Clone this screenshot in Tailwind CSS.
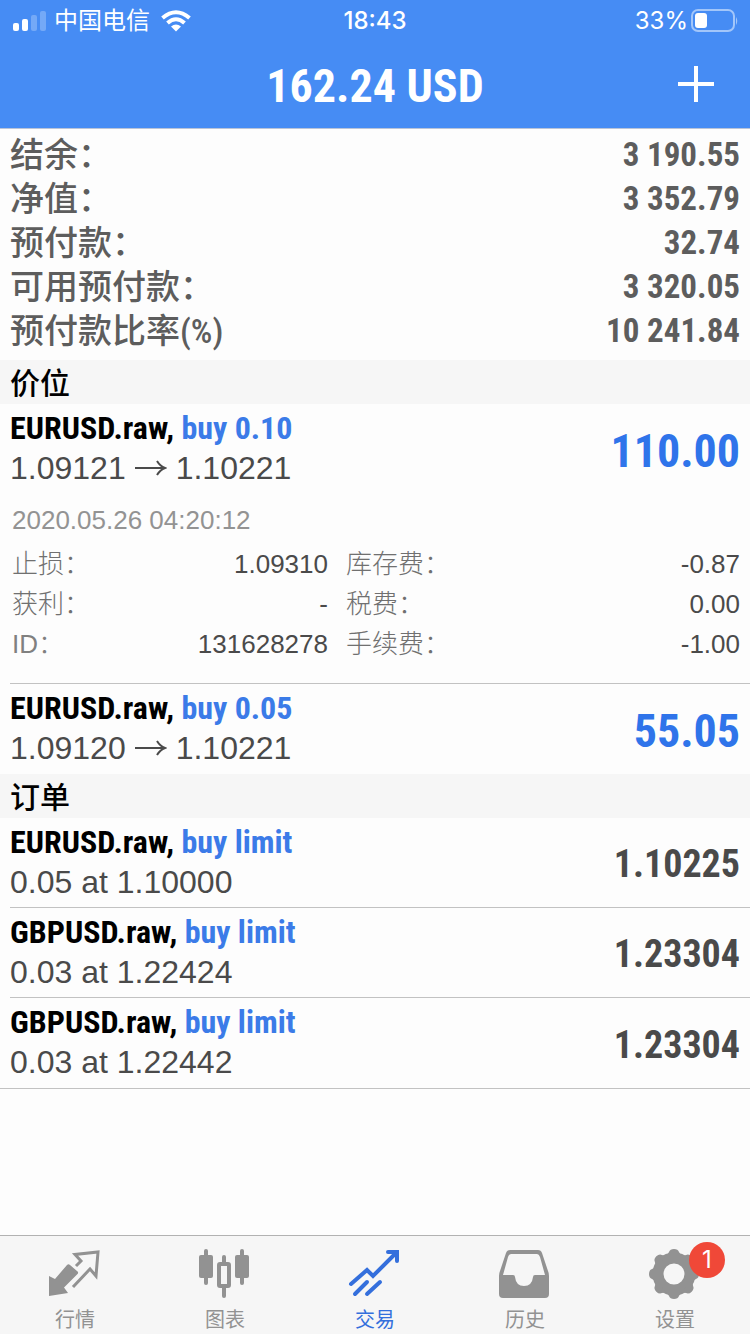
<!DOCTYPE html>
<html lang="zh-CN">
<head>
<meta charset="utf-8">
<meta name="viewport" content="width=device-width, initial-scale=1">
<title>交易</title>
<script src="https://cdn.jsdelivr.net/npm/@tailwindcss/browser@4"></script>
</head>
<body class="flex min-h-screen flex-col bg-[#fdfdfd] font-['Liberation_Sans','Noto_Sans_CJK_SC',sans-serif] text-[#4a4a4a]">

<header class="border-b border-[#b9c4d8] bg-[#468cf4] text-white">
  <div class="grid h-10 grid-cols-3 items-center px-3 pt-px font-['Inter','Noto_Sans_CJK_SC',sans-serif] text-2xl leading-10">
    <div class="flex items-center">
      <svg class="mr-2 h-6 w-[34px]" viewBox="0 0 34 24" fill="#fff" aria-hidden="true">
        <rect x="1" y="14" width="6" height="8" rx="2"/>
        <rect x="10" y="10" width="6" height="12" rx="2"/>
        <rect x="19" y="6" width="6" height="16" rx="2" opacity=".25"/>
        <rect x="28" y="2" width="6" height="20" rx="2" opacity=".25"/>
      </svg>
      <span>中国电信</span>
      <svg class="ml-[10px] h-6 w-8" viewBox="0 0 32 24" fill="none" stroke="#fff" stroke-width="4" aria-hidden="true">
        <path d="M2.500 9Q16-2.500 29.500 9"/>
        <path d="M7.500 14Q16 6.500 24.500 14"/>
        <path d="M16 22.500L11 17.500Q16 13.500 21 17.500Z" fill="#fff" stroke="none"/>
      </svg>
    </div>
    <time class="text-center font-medium">18:43</time>
    <div class="flex items-center justify-end gap-0.5">
      <span>33%</span>
      <svg class="h-6 w-12" viewBox="0 0 48 24" fill="none" aria-hidden="true">
        <rect x="2" y="1" width="42" height="21" rx="6" stroke="#a2c6fa" stroke-width="2"/>
        <rect x="5" y="4" width="12" height="15" rx="3" fill="#fff"/>
        <path d="M46 8Q48.500 12 46 16Z" fill="#a2c6fa"/>
      </svg>
    </div>
  </div>
  <div class="grid h-[88px] grid-cols-[1fr_auto_1fr] items-center px-8">
    <h1 class="col-start-2 pt-1 font-['Roboto_Condensed','Roboto',sans-serif] text-[46px] font-bold">162.24 USD</h1>
    <button type="button" aria-label="新建订单" class="justify-self-end">
      <svg class="h-11 w-11" viewBox="0 0 44 44" stroke="#fff" stroke-width="4" aria-hidden="true"><path d="M22 4V40M4 22H40"/></svg>
    </button>
  </div>
</header>

<main class="grow">
  <dl class="px-[10px] pt-1 pb-[7px] font-['Roboto_Condensed','Noto_Sans_CJK_SC',sans-serif] text-[34px] leading-11 text-[#5d5d5d]">
    <div class="flex justify-between"><dt class="font-medium">结余：</dt><dd class="text-[33px] leading-11 font-bold">3 190.55</dd></div>
    <div class="flex justify-between"><dt class="font-medium">净值：</dt><dd class="text-[33px] leading-11 font-bold">3 352.79</dd></div>
    <div class="flex justify-between"><dt class="font-medium">预付款：</dt><dd class="text-[33px] leading-11 font-bold">32.74</dd></div>
    <div class="flex justify-between"><dt class="font-medium">可用预付款：</dt><dd class="text-[33px] leading-11 font-bold">3 320.05</dd></div>
    <div class="flex justify-between"><dt class="font-medium">预付款比率(%)</dt><dd class="text-[33px] leading-11 font-bold">10 241.84</dd></div>
  </dl>

  <section>
    <h2 class="bg-[#f6f6f6] px-[10px] pb-0.5 font-['Noto_Sans_CJK_SC',sans-serif] text-[30px] leading-[42px] font-medium text-black">价位</h2>
    <ul>
      <li class="ml-[10px] border-b border-[#c2c2c2] pr-[10px]">
        <div class="flex h-[90px] items-center justify-between">
          <div class="pb-0.5">
            <h3 class="font-['Roboto_Condensed','Roboto',sans-serif] text-[32px] leading-10 font-bold text-black">EURUSD.raw, <span class="text-[#3b7be8]">buy 0.10</span></h3>
            <p class="flex items-center gap-[9px] text-[32px] leading-10">1.09121
              <svg class="h-5 w-8" viewBox="0 0 32 20" fill="none" stroke="#4a4a4a" stroke-width="2" role="img" aria-label="至"><path d="M0 10H30M22 3Q25 8 30 10Q25 12 22 17"/></svg>
              1.10221</p>
          </div>
          <strong class="pt-1 font-['Roboto_Condensed','Roboto',sans-serif] text-[46px] font-bold text-[#2f74ea]">110.00</strong>
        </div>
        <div class="pt-[6px] pb-[19px] pl-[2px] text-[26px] leading-10">
          <time class="block pb-1 text-[#939393]">2020.05.26 04:20:12</time>
          <dl class="grid grid-cols-[316fr_394fr] gap-x-[18px]">
            <div class="flex justify-between"><dt class="font-light text-[#707070]">止损：</dt><dd>1.09310</dd></div>
            <div class="flex justify-between"><dt class="font-light text-[#707070]">库存费：</dt><dd>-0.87</dd></div>
            <div class="flex justify-between"><dt class="font-light text-[#707070]">获利：</dt><dd>-</dd></div>
            <div class="flex justify-between"><dt class="font-light text-[#707070]">税费：</dt><dd>0.00</dd></div>
            <div class="flex justify-between"><dt class="font-light text-[#808080]">ID：</dt><dd>131628278</dd></div>
            <div class="flex justify-between"><dt class="font-light text-[#707070]">手续费：</dt><dd>-1.00</dd></div>
          </dl>
        </div>
      </li>
      <li class="ml-[10px] flex h-[90px] items-center justify-between pr-[10px]">
        <div class="pb-0.5">
          <h3 class="font-['Roboto_Condensed','Roboto',sans-serif] text-[32px] leading-10 font-bold text-black">EURUSD.raw, <span class="text-[#3b7be8]">buy 0.05</span></h3>
          <p class="flex items-center gap-[9px] text-[32px] leading-10">1.09120
            <svg class="h-5 w-8" viewBox="0 0 32 20" fill="none" stroke="#4a4a4a" stroke-width="2" role="img" aria-label="至"><path d="M0 10H30M22 3Q25 8 30 10Q25 12 22 17"/></svg>
            1.10221</p>
        </div>
        <strong class="pt-1 font-['Roboto_Condensed','Roboto',sans-serif] text-[46px] font-bold text-[#2f74ea]">55.05</strong>
      </li>
    </ul>
  </section>

  <section>
    <h2 class="bg-[#f6f6f6] px-[10px] pb-0.5 font-['Noto_Sans_CJK_SC',sans-serif] text-[30px] leading-[42px] font-medium text-black">订单</h2>
    <ul class="border-b border-[#c2c2c2]">
      <li class="ml-[10px] flex h-[90px] items-center justify-between border-b border-[#c2c2c2] pr-[10px]">
        <div class="pb-0.5">
          <h3 class="font-['Roboto_Condensed','Roboto',sans-serif] text-[32px] leading-10 font-bold text-black">EURUSD.raw, <span class="text-[#3b7be8]">buy limit</span></h3>
          <p class="text-[32px] leading-10">0.05 at 1.10000</p>
        </div>
        <strong class="pt-1 font-['Roboto_Condensed','Roboto',sans-serif] text-[38px] font-bold">1.10225</strong>
      </li>
      <li class="ml-[10px] flex h-[90px] items-center justify-between border-b border-[#c2c2c2] pr-[10px]">
        <div class="pb-0.5">
          <h3 class="font-['Roboto_Condensed','Roboto',sans-serif] text-[32px] leading-10 font-bold text-black">GBPUSD.raw, <span class="text-[#3b7be8]">buy limit</span></h3>
          <p class="text-[32px] leading-10">0.03 at 1.22424</p>
        </div>
        <strong class="pt-1 font-['Roboto_Condensed','Roboto',sans-serif] text-[38px] font-bold">1.23304</strong>
      </li>
      <li class="ml-[10px] flex h-[90px] items-center justify-between pr-[10px]">
        <div class="pb-0.5">
          <h3 class="font-['Roboto_Condensed','Roboto',sans-serif] text-[32px] leading-10 font-bold text-black">GBPUSD.raw, <span class="text-[#3b7be8]">buy limit</span></h3>
          <p class="text-[32px] leading-10">0.03 at 1.22442</p>
        </div>
        <strong class="pt-1 font-['Roboto_Condensed','Roboto',sans-serif] text-[38px] font-bold">1.23304</strong>
      </li>
    </ul>
  </section>
</main>

<nav class="sticky bottom-0 grid grid-cols-5 border-t border-[#b2b2b2] bg-[#f6f6f6] pt-3 font-['Noto_Sans_CJK_SC',sans-serif] text-xl leading-7 text-[#929292]">
  <a href="#quotes" class="flex flex-col items-center gap-[3px] pb-px">
    <svg class="h-[54px] w-[54px]" viewBox="0 0 54 54" aria-hidden="true">
      <path d="M1 28L7 31L19 17Q20.500 15.500 22 17L29 23Q31 24.500 29.500 26L16 39.500L20 45L1 48Z" fill="currentColor"/>
      <path d="M28 18L33 13L27 6.500L50 4L48 28L42 21L25 39" fill="none" stroke="currentColor" stroke-width="3"/>
    </svg>
    行情
  </a>
  <a href="#charts" class="flex flex-col items-center gap-[3px] pb-px">
    <svg class="h-[54px] w-[54px]" viewBox="0 0 54 54" fill="currentColor" aria-hidden="true">
      <rect x="6" y="1" width="4" height="36" rx="2"/><rect x="1" y="7" width="14" height="23" rx="2"/>
      <rect x="42" y="1" width="4" height="36" rx="2"/><rect x="37" y="7" width="14" height="23" rx="2"/>
      <rect x="24" y="7" width="4" height="10" rx="2"/><rect x="24" y="38" width="4" height="12" rx="2"/>
      <rect x="21" y="16" width="10" height="22" rx="1" fill="none" stroke="currentColor" stroke-width="4"/>
    </svg>
    图表
  </a>
  <a href="#trade" aria-current="page" class="flex flex-col items-center gap-[3px] pb-px text-[#346fdc]">
    <svg class="h-[54px] w-[54px]" viewBox="0 0 54 54" fill="none" stroke="currentColor" stroke-width="4" stroke-linecap="round" aria-hidden="true">
      <path d="M3 36L19 22L25 28L48 5"/>
      <path d="M40 4H49V13"/>
      <path d="M44 4H49V9Z" fill="currentColor" stroke="none"/>
      <path d="M7 46L19 34M19 46L32 34"/>
    </svg>
    交易
  </a>
  <a href="#history" class="flex flex-col items-center gap-[3px] pb-px">
    <svg class="h-[54px] w-[54px]" viewBox="0 0 54 54" aria-hidden="true">
      <path fill="currentColor" fill-rule="evenodd" d="M12 2H40Q43 2 44 5L50 23Q51 25 51 28V46Q51 50 47 50H5Q1 50 1 46V28Q1 25 2 23L8 5Q9 2 12 2ZM13 6Q11 6 10 9L5 27H15Q17 27 17 29Q18 38 26 38Q34 38 35 29Q35 27 37 27H47L42 9Q41 6 39 6Z"/>
    </svg>
    历史
  </a>
  <a href="#settings" class="flex flex-col items-center gap-[3px] pb-px">
    <span class="relative">
      <svg class="h-[54px] w-[54px]" viewBox="0 0 54 54" fill="currentColor" aria-hidden="true">
        <circle cx="26" cy="26" r="16" fill="none" stroke="currentColor" stroke-width="11"/>
        <path id="tooth" d="M17 8Q20 7 21 4Q22 1 26 1Q30 1 31 4Q32 7 35 8Z"/>
        <use href="#tooth" transform="rotate(45 26 26)"/>
        <use href="#tooth" transform="rotate(90 26 26)"/>
        <use href="#tooth" transform="rotate(135 26 26)"/>
        <use href="#tooth" transform="rotate(180 26 26)"/>
        <use href="#tooth" transform="rotate(225 26 26)"/>
        <use href="#tooth" transform="rotate(270 26 26)"/>
        <use href="#tooth" transform="rotate(315 26 26)"/>
      </svg>
      <span class="absolute -top-[6px] left-[41px] flex h-9 w-9 items-center justify-center rounded-full bg-[#f04838] font-['Inter',sans-serif] text-2xl text-white">1</span>
    </span>
    设置
  </a>
</nav>
</body>
</html>
